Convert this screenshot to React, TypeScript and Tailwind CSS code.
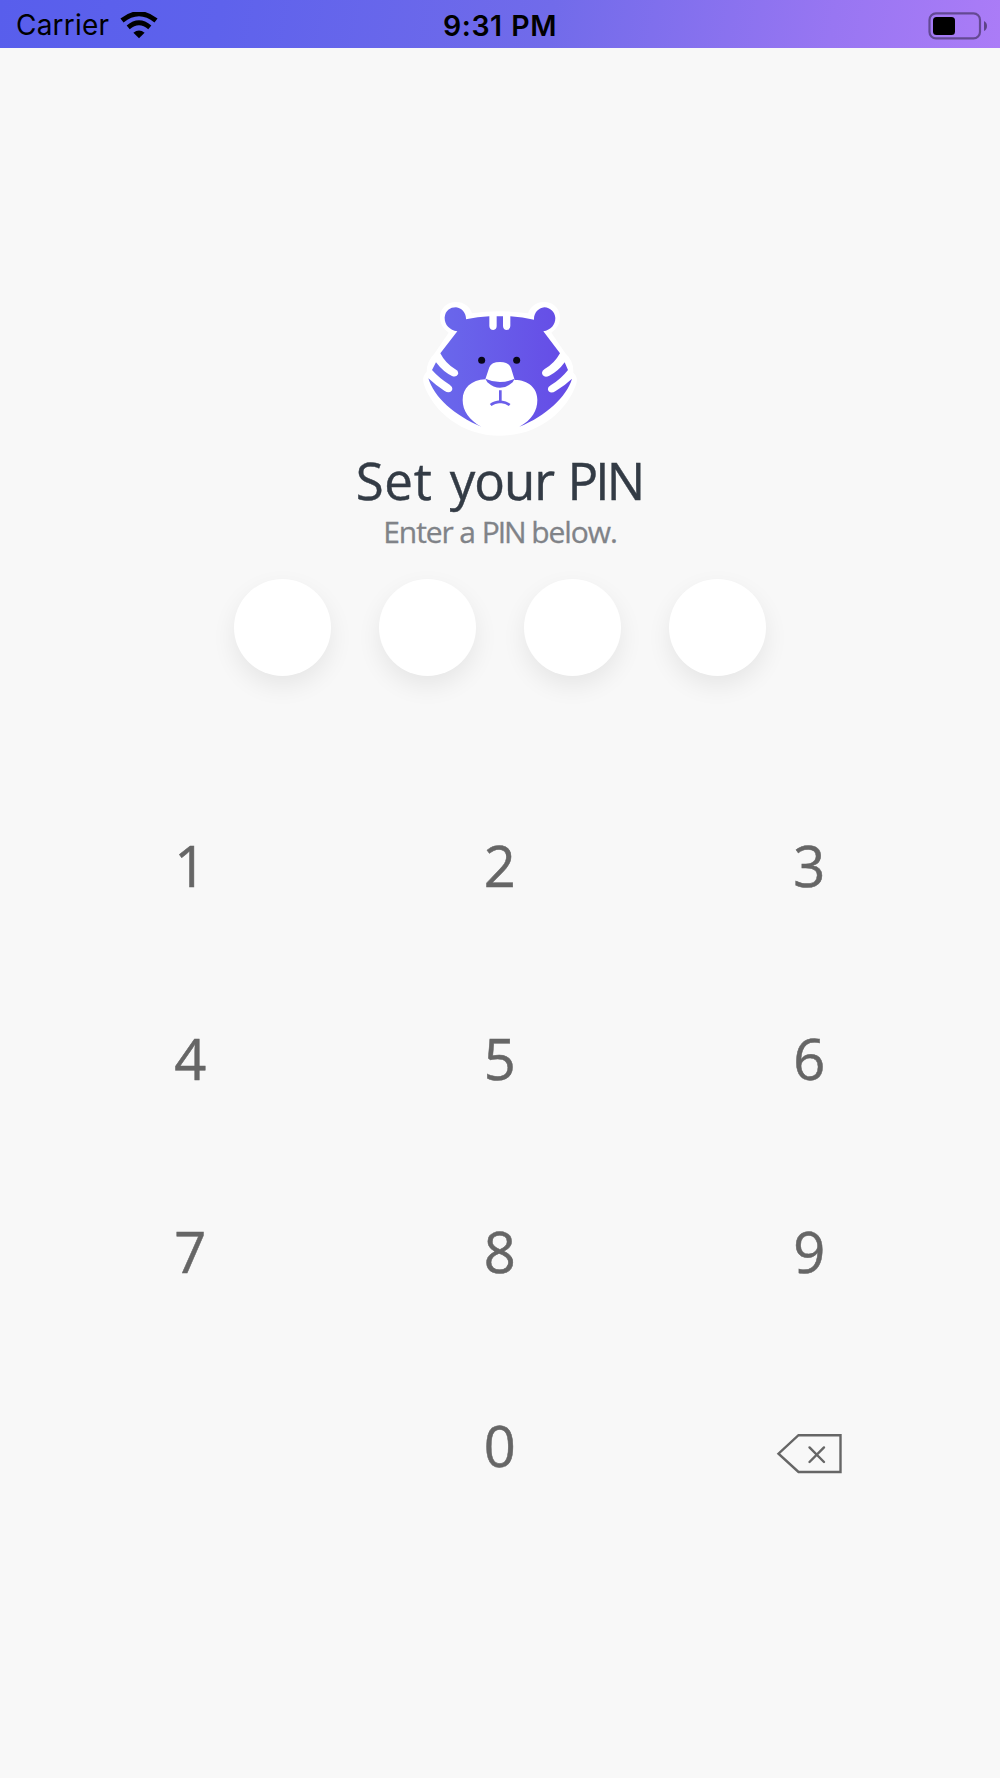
import React from "react";

function WifiIcon() {
  return (
    <svg className="block h-[28px] w-[38px]" viewBox="0 0 38 28" fill="none">
      <path d="M2 8.5Q19 -5 36 8.5" stroke="#000" strokeWidth="5" />
      <path d="M8.2 15.3Q19 6.3 29.8 15.3" stroke="#000" strokeWidth="4.8" />
      <path d="M13.4 20.8Q19 16.1 24.6 20.8L19 26.3Z" fill="#000" />
    </svg>
  );
}

function BatteryIcon() {
  return (
    <svg className="block h-[30px] w-[62px]" viewBox="0 0 62 30">
      <rect x="2.5" y="2.4" width="50.5" height="25" rx="6.5" fill="none" stroke="#000" strokeOpacity=".4" strokeWidth="2.2" />
      <rect x="6" y="6" width="22" height="18" rx="3.5" fill="#000" />
      <path d="M57 10Q60 11.5 60 15T57 20Z" fill="#000" fillOpacity=".45" />
    </svg>
  );
}

function StatusBar() {
  return (
    <header className="grid h-[48px] grid-cols-3 items-center bg-linear-[100deg,#585eec_0%,#5e62ec_22%,#716bea_55%,#9876f2_83%,#ab7cf7_100%] font-['Inter'] text-[28px] leading-[51px] text-black">
      <div className="flex items-center pl-[16px]">
        <span className="w-[104px] whitespace-nowrap tracking-[0.2px]">Carrier</span>
        <WifiIcon />
      </div>
      <div className="text-center text-[28.5px] font-semibold tracking-[0.5px] whitespace-nowrap [word-spacing:1px]">9:31 PM</div>
      <div className="flex justify-end pr-[11px]">
        <BatteryIcon />
      </div>
    </header>
  );
}

function TigerLogo() {
  return (
    <svg className="block h-[160px] w-[180px]" viewBox="0 0 540 480">
      <defs>
        <linearGradient id="fur" gradientUnits="userSpaceOnUse" x1="56" y1="0" x2="486" y2="0">
          <stop offset="0" stopColor="#6a6aec" />
          <stop offset="1" stopColor="#654be6" />
        </linearGradient>
      </defs>
      <path
        d="M104 118C76 86 92 38 135 36C162 35 180 50 186 70Q270 58 354 70C362 47 383 34 405 36C448 38 464 86 436 118L424 128L466 190Q492 214 490 248Q506 262 498 284C470 364 385 437 270 437S70 364 42 284Q34 262 50 246Q50 214 74 190L116 128Z"
        fill="#fff"
      />
      <g fill="url(#fur)">
        <path d="M142 124C118 120 103 104 104 82C106 62 120 52 138 52C156 54 169 70 168 88Q203 81 238 79V108Q239 120 250 120Q260 119 260 108V79H279V108Q280 120 290 120Q301 119 301 108V79Q338 81 372 89C371 70 384 54 403 52C421 53 435 66 436 84C436 104 423 120 400 124L450 190Q433 221 404 237Q392 245 398 255Q405 264 418 257Q444 245 464 217L474 240Q453 267 422 286Q409 294 416 304Q424 312 437 303Q465 286 486 266C470 320 408 378 328 410C366 390 382 362 382 330C382 294 355 270 314 270L303 234Q296 216 270 216T238 232L226 268C184 270 158 294 158 330C158 363 178 391 214 410C134 377 72 322 55 265Q80 288 104 303Q117 311 125 302Q131 293 119 284Q88 265 66 240L78 217Q100 246 126 258Q138 263 144 253Q147 243 136 238Q106 220 91 190Z" />
        <path d="M226 266Q270 286 314 266L308 277Q270 310 232 277Z" />
      </g>
      <path d="M271 301V332M242 345Q252 337 271 335Q289 337 299 345" fill="none" stroke="#6b5eea" strokeWidth="8" />
      <circle cx="215" cy="211" r="10.5" fill="#080617" />
      <circle cx="320" cy="211" r="10.5" fill="#080617" />
    </svg>
  );
}

function BackspaceIcon() {
  return (
    <svg className="mt-[16px] ml-[2px] block h-[42px] w-[68px]" viewBox="0 0 68 42" fill="none" stroke="#666">
      <path d="M22.5 2.2H64.5V39H22.5L2.5 20.7Z" strokeWidth="2.4" />
      <path d="M33.5 14.4L48 29M48 14.4L33.5 29" strokeWidth="2.4" strokeLinecap="round" />
    </svg>
  );
}

const keys = ["1", "2", "3", "4", "5", "6", "7", "8", "9", "", "0", "back"];

export default function App() {
  return (
    <main className="flex h-[1778px] w-[1000px] flex-col overflow-hidden bg-[#f8f8f8] font-['Open_Sans',sans-serif]">
      <StatusBar />
      <section className="flex flex-col items-center pt-[242px]">
        <TigerLogo />
        <h1 className="h-[63px] pr-[2px] text-[51px] leading-[60px] tracking-[-1px] whitespace-nowrap text-[#333b45] [-webkit-text-stroke:0.4px_#333b45]">
          <span className="mr-[5px] tracking-[0.7px]">Set</span> your <span className="ml-px tracking-[-2.8px]">PIN</span>
        </h1>
        <p className="h-[66px] text-[30px] leading-[37px] tracking-[-1.1px] whitespace-nowrap text-[#808388] [-webkit-text-stroke:0.3px_#808388]">
          Enter a <span className="tracking-[-2px]">PIN</span> below.
        </p>
        <div className="flex gap-[48.2px]">
          {[0, 1, 2, 3].map((i) => (
            <div key={i} className="size-[96.7px] rounded-full bg-white shadow-[0_10px_24px_rgba(0,0,0,0.075)]" />
          ))}
        </div>
      </section>
      <section className="mt-[93px] ml-[35.5px] grid w-[928.5px] grid-cols-3 text-[56px] leading-[193.4px] text-[#666] [-webkit-text-stroke:0.5px_#666]">
        {keys.map((key, i) => (
          <button key={i} className="flex h-[193.4px] items-center justify-center">
            {key === "back" ? <BackspaceIcon /> : key}
          </button>
        ))}
      </section>
    </main>
  );
}
